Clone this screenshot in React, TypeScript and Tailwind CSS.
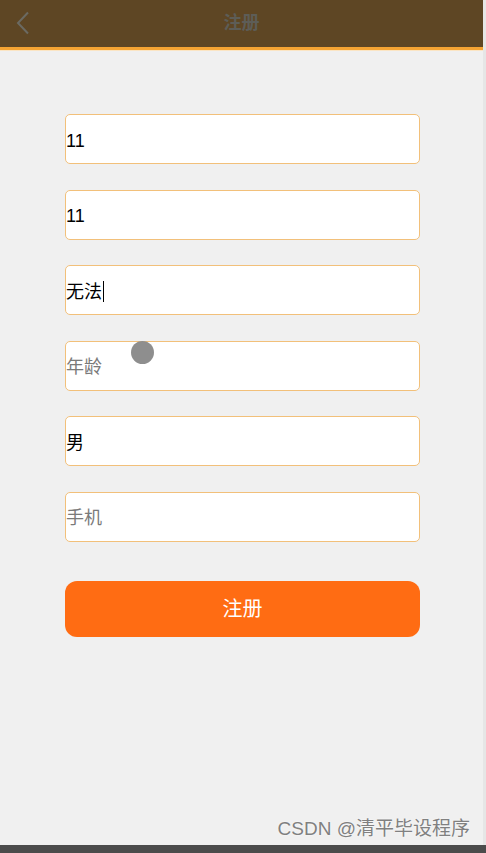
import React from "react";

// Register form fields (value shown as typed text, otherwise placeholder)
const fields: { value?: string; placeholder?: string; caret?: boolean }[] = [
  { value: "11" },
  { value: "11" },
  { value: "无法", caret: true },
  { placeholder: "年龄" },
  { value: "男" },
  { placeholder: "手机" },
];

const App: React.FC = () => {
  return (
    <div
      className="relative flex h-[853px] w-[486px] flex-col overflow-hidden bg-[#f0f0f0]"
      style={{ fontFamily: '"Liberation Sans", "Noto Sans CJK SC", sans-serif' }}
    >
      <div className="flex flex-1">
        <div className="flex flex-1 flex-col">
          {/* header */}
          <div className="relative flex h-[47px] items-center justify-center bg-[#5e4624]">
            <svg
              className="absolute left-[15px] top-[11px]"
              width="16"
              height="24"
              viewBox="0 0 16 24"
              fill="none"
            >
              <path d="M13 1.5 L3 12 L13 22.5" stroke="#6b6a62" strokeWidth="2" />
            </svg>
            <span className="text-[18px] font-bold text-[#5d5d57]">注册</span>
          </div>
          <div className="h-[3px] bg-[#f5a433]" />
          <div className="h-[1px] bg-[#fbe5c4]" />

          {/* form */}
          <div className="flex w-[355px] flex-col gap-[25.6px] ml-[65px] pt-[63px]">
            {fields.map((f, i) => (
              <div
                key={i}
                className="flex h-[50px] items-center rounded-[5px] border border-[#f2c07a] bg-white pt-[3px]"
              >
                {f.value ? (
                  <span className="flex items-center text-[18px] leading-none text-black">
                    {f.value}
                    {f.caret && <span className="ml-[1px] h-[21px] w-[1px] bg-black" />}
                  </span>
                ) : (
                  <span className="text-[18px] leading-none text-[#7a7a7a]">{f.placeholder}</span>
                )}
              </div>
            ))}
            <button className="mt-[13px] h-[56px] rounded-[12px] bg-[#ff6c13] text-[20px] text-white">
              注册
            </button>
          </div>

          <div className="flex flex-1 items-end justify-end pb-[2px] pr-[13px]">
            <span className="text-[19px] text-[#808080] [text-shadow:0_0_2px_#ffffff]">
              CSDN @清平毕设程序
            </span>
          </div>
        </div>
        <div className="w-[3px] bg-[#e6e6e6]" />
      </div>
      <div className="h-[8px] bg-[#4b4b4b]" />

      {/* touch indicator */}
      <div className="absolute left-[131px] top-[341px] h-[23px] w-[23px] rounded-full bg-[#8e8e8e]" />
    </div>
  );
};

export default App;
